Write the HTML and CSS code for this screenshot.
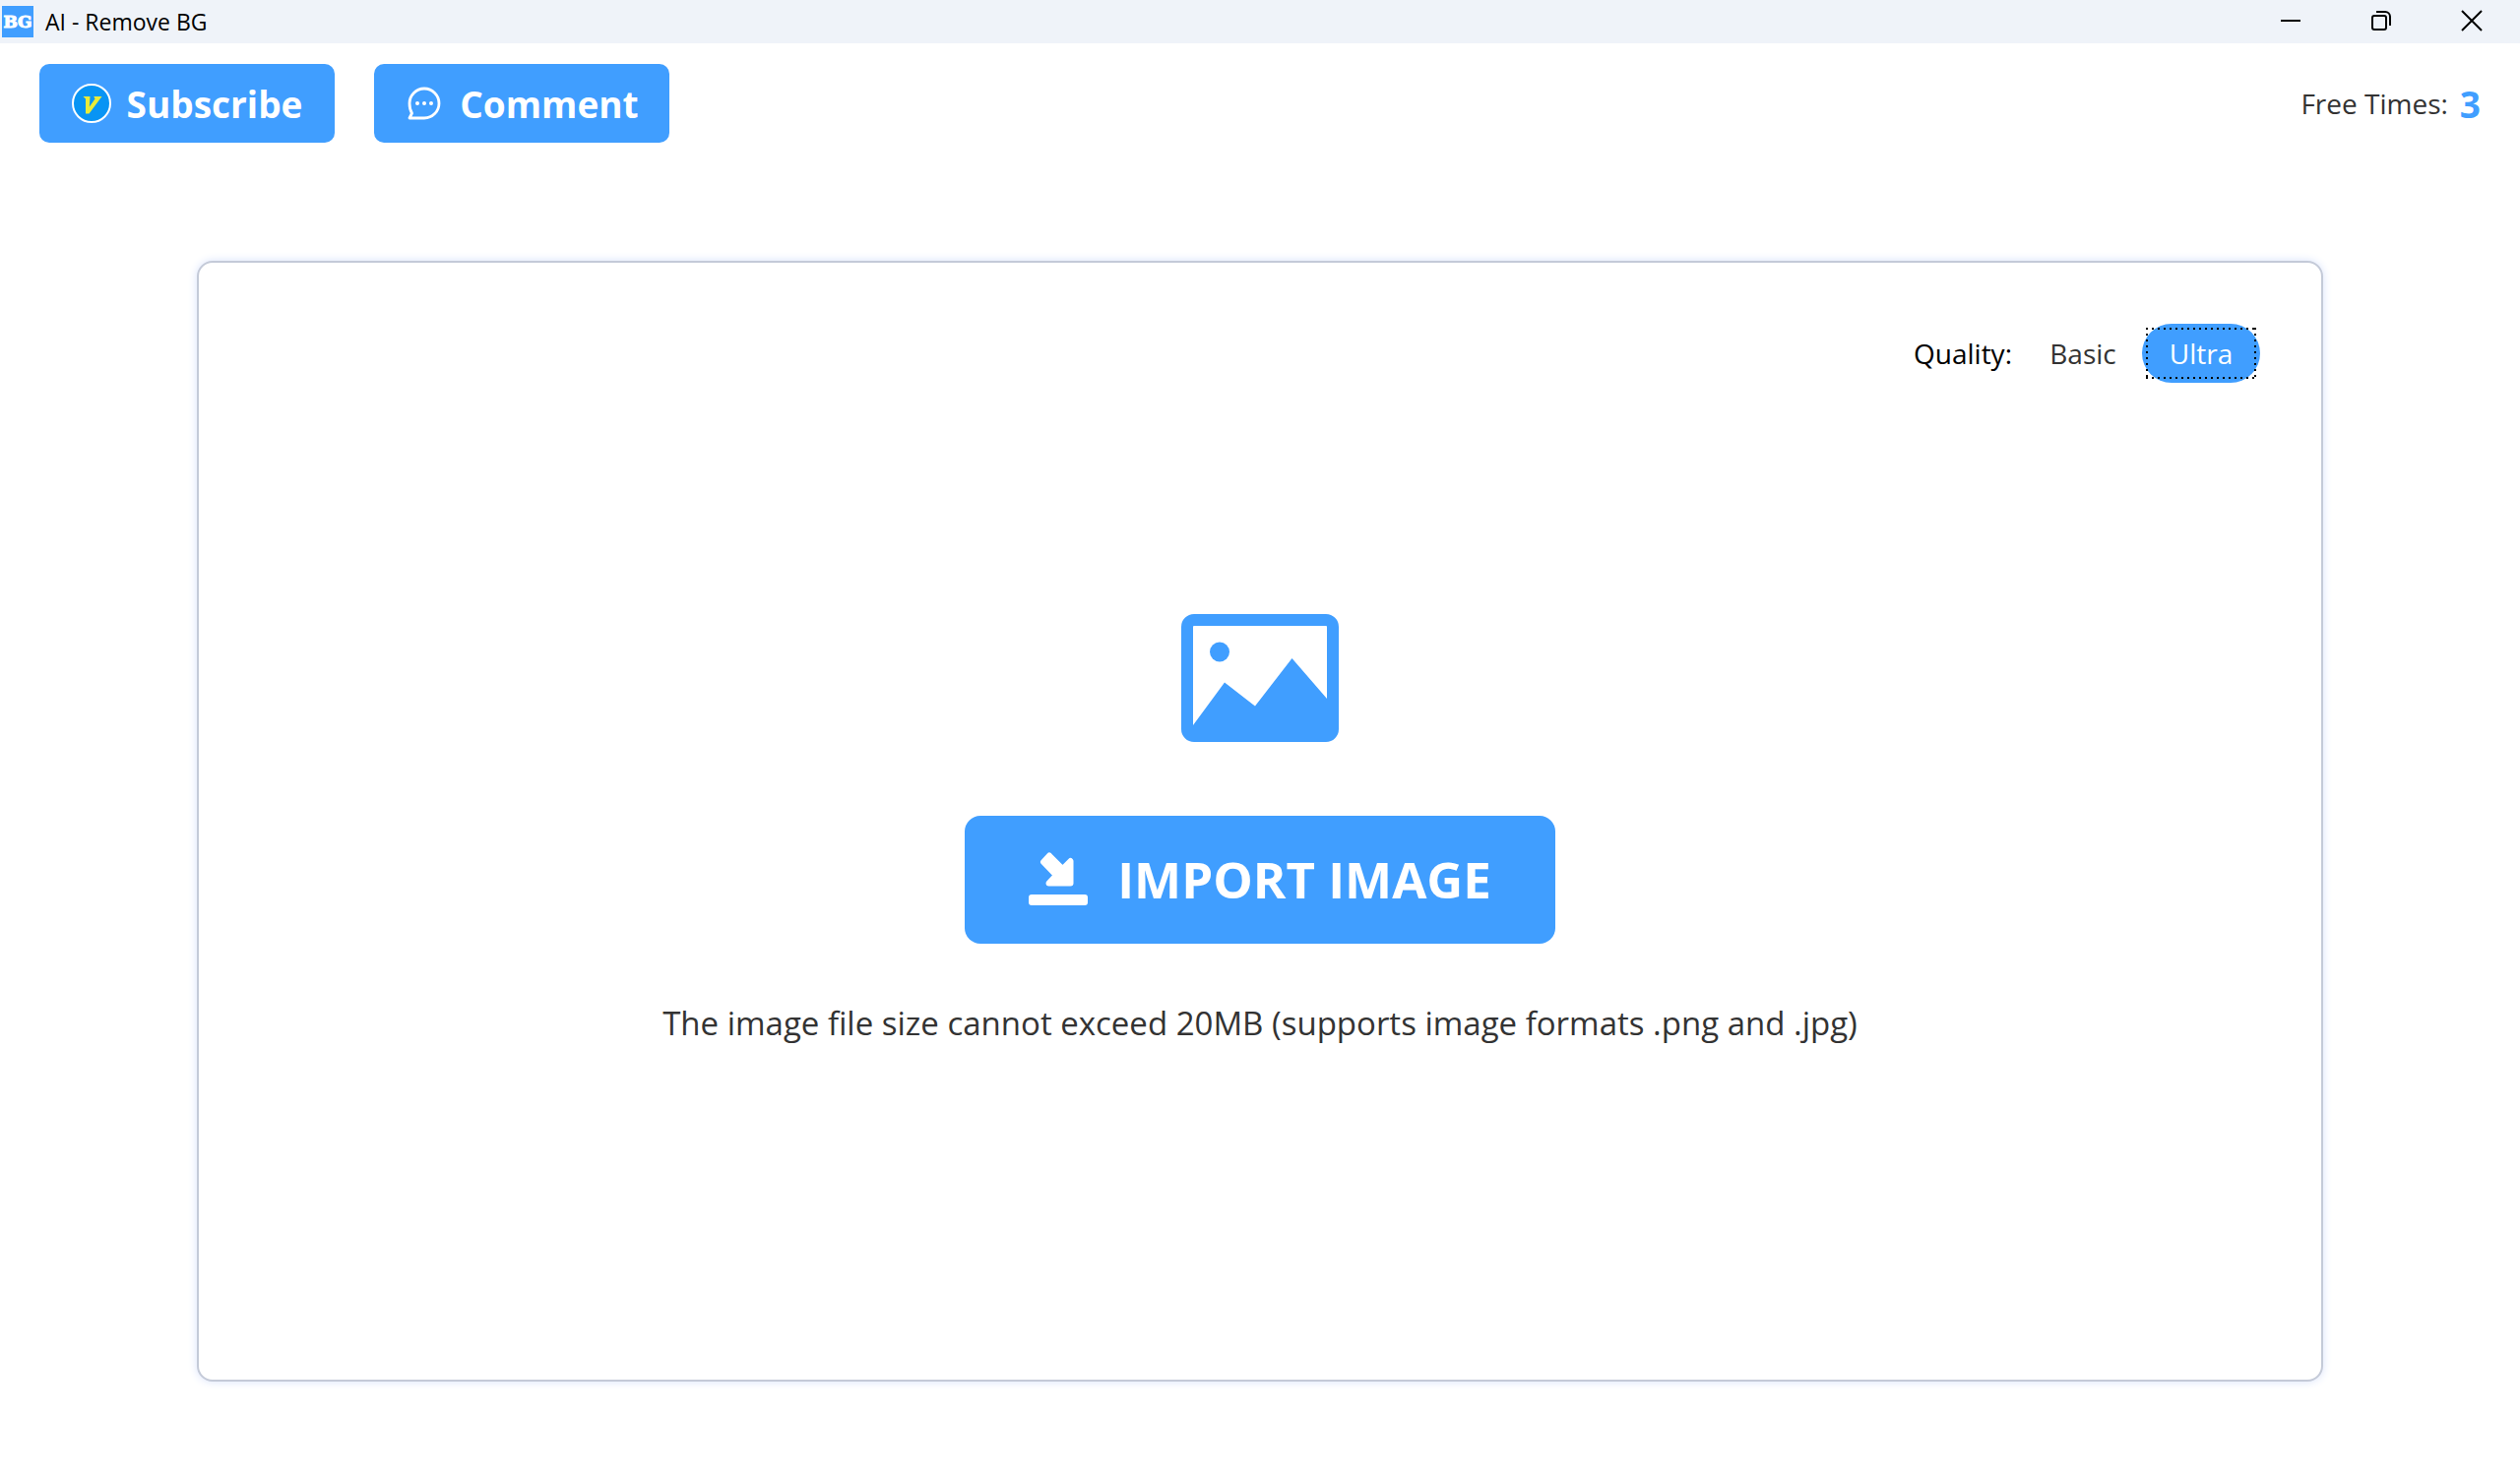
FILE: index.html
```html
<!DOCTYPE html>
<html lang="en">
<head>
<meta charset="utf-8">
<meta name="viewport" content="width=device-width, initial-scale=1">
<title>AI - Remove BG</title>
<link rel="stylesheet" href="styles.css">
</head>
<body>
<header class="titlebar">
  <span class="app-icon" aria-hidden="true">BG</span>
  <span class="app-title">AI - Remove BG</span>
  <div class="window-controls">
    <button type="button" aria-label="Minimize"><svg width="20" height="20" viewBox="0 0 20 20"><path d="M0 10H20"/></svg></button>
    <button type="button" aria-label="Restore"><svg width="20" height="20" viewBox="0 0 20 20"><rect x="1" y="5" width="14" height="14" rx="2"/><path d="M5 1H14A5 5 0 0 1 19 6V15"/></svg></button>
    <button type="button" aria-label="Close"><svg width="20" height="20" viewBox="0 0 20 20"><path d="M0 0L20 20M20 0L0 20"/></svg></button>
  </div>
</header>
<nav class="toolbar">
  <button type="button" class="action">
    <svg width="40" height="40" viewBox="0 0 40 40"><circle cx="20" cy="20" r="19" fill="#0894f4" stroke="#fff" stroke-width="2"/><path d="M11.500 13H18.500L17.800 23.500L23.500 15.500L22.300 13H30.500L17.500 30.500H14L14 15.500Z" fill="#e9ec38"/></svg>
    Subscribe
  </button>
  <button type="button" class="action">
    <svg width="40" height="40" viewBox="0 0 40 40"><path d="M5 35L7.500 30C5.500 27 5 24 5 20A15 15 0 1 1 20 35Z" fill="none" stroke="#fff" stroke-width="2.800" stroke-linejoin="round"/><g fill="#fff"><circle cx="13" cy="20" r="2"/><circle cx="20" cy="20" r="2"/><circle cx="27" cy="20" r="2"/></g></svg>
    Comment
  </button>
  <p class="quota">Free Times: <strong>3</strong></p>
</nav>
<main class="dropzone">
  <div class="quality" role="group" aria-labelledby="quality-label">
    <span id="quality-label" class="quality-label">Quality:</span>
    <button type="button" class="pill" aria-pressed="false">Basic</button>
    <button type="button" class="pill pill-active" aria-pressed="true">Ultra</button>
  </div>
  <div class="upload">
    <svg width="160" height="130" viewBox="0 0 160 130" aria-hidden="true"><path fill="#409eff" fill-rule="evenodd" d="M13 0H147A13 13 0 0 1 160 13V117A13 13 0 0 1 147 130H13A13 13 0 0 1 0 117V13A13 13 0 0 1 13 0ZM13 12A1 1 0 0 0 12 13V113L44 69.500L75 93.500L112.500 45L148 86V13A1 1 0 0 0 147 12Z"/><circle cx="39" cy="38.500" r="10" fill="#409eff"/></svg>
    <button type="button" class="import">
      <svg width="60" height="54" viewBox="0 0 60 54" fill="#fff"><rect y="43" width="60" height="11" rx="3"/><path stroke="#fff" stroke-width="6" stroke-linejoin="round" d="M21 3.500L34.500 17L42.500 9V31.500H20.500L28 23.500L15 10Z"/></svg>
      IMPORT IMAGE
    </button>
    <p class="hint">The image file size cannot exceed 20MB (supports image formats .png and .jpg)</p>
  </div>
</main>
</body>
</html>
```
FILE: styles.css
```css
* { box-sizing: border-box; }

body {
  margin: 0;
  min-height: 100vh;
  display: flex;
  flex-direction: column;
  background: #fff;
  color: #333;
  font-family: "Open Sans", "Noto Sans", sans-serif;
}

button {
  margin: 0;
  padding: 0;
  border: 0;
  background: none;
  color: inherit;
  font: inherit;
}

p { margin: 0; }

svg { display: block; flex: none; }

.titlebar {
  display: flex;
  align-items: center;
  height: 44px;
  padding: 0 3px 0 2px;
  background: #eff3f9;
  color: #000;
}

.app-icon {
  width: 32px;
  height: 32px;
  background: #409eff;
  color: #fff;
  font: bold 17px/32px "DejaVu Serif", serif;
  -webkit-text-stroke: 1px #fff;
  text-align: center;
}

.app-title {
  margin-left: 12px;
  font-size: 23px;
}

.window-controls {
  display: flex;
  align-self: stretch;
  margin-left: auto;
}

.window-controls button {
  display: grid;
  place-items: center;
  width: 92px;
  padding-bottom: 2px;
}

.window-controls svg {
  overflow: visible;
  fill: none;
  stroke: #000;
  stroke-width: 2;
}

.toolbar {
  display: flex;
  align-items: center;
  gap: 40px;
  padding: 21px 40px 0;
}

.action {
  display: flex;
  align-items: center;
  justify-content: center;
  gap: 16px;
  min-width: 300px;
  height: 80px;
  border-radius: 10px;
  background: #409eff;
  color: #fff;
  font-size: 37px;
  font-weight: 700;
}

.quota {
  display: flex;
  align-items: center;
  gap: 12px;
  margin-left: auto;
  font-size: 28px;
}

.quota strong {
  color: #409eff;
  font-size: 37px;
}

.dropzone {
  flex: 1;
  display: flex;
  flex-direction: column;
  margin: 120px 200px 100px;
  padding: 62px;
  border: 2px solid #c4cad8;
  border-radius: 16px;
  background: #fff;
  box-shadow: 0 0 10px #d8e2fb;
}

.quality {
  display: flex;
  align-items: center;
  justify-content: flex-end;
  font-size: 28px;
}

.quality-label {
  margin-right: 12px;
  color: #000;
}

.pill {
  position: relative;
  min-width: 120px;
  height: 60px;
  border-radius: 30px;
}

.pill-active {
  background: #409eff;
  color: #fff;
}

.pill-active::after {
  content: "";
  position: absolute;
  inset: 4px;
  background:
    repeating-linear-gradient(90deg, #000 0 2px, transparent 2px 6px) top / 100% 2px no-repeat,
    repeating-linear-gradient(90deg, #000 0 2px, transparent 2px 6px) bottom / 100% 2px no-repeat,
    repeating-linear-gradient(#000 0 2px, transparent 2px 6px) left / 2px 100% no-repeat,
    repeating-linear-gradient(#000 0 2px, transparent 2px 6px) right / 2px 100% no-repeat;
}

.upload {
  flex: 1;
  display: flex;
  flex-direction: column;
  align-items: center;
  padding-top: 235px;
}

.import {
  display: flex;
  align-items: center;
  justify-content: center;
  gap: 30px;
  min-width: 600px;
  height: 130px;
  margin-top: 75px;
  padding-bottom: 2px;
  border-radius: 16px;
  background: #409eff;
  color: #fff;
  font-size: 51px;
  font-weight: 700;
}

.hint {
  margin-top: 58px;
  font-size: 33px;
}
```
